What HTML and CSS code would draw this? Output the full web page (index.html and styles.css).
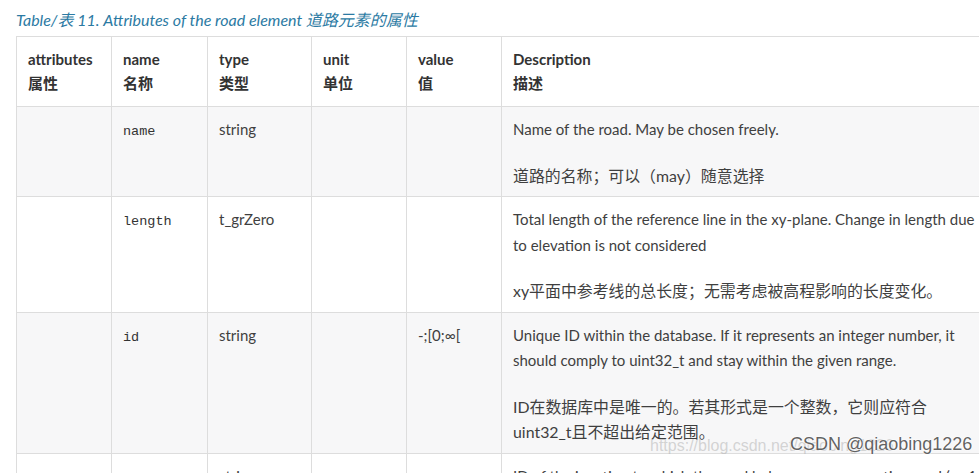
FILE: index.html
```html
<!DOCTYPE html>
<html>
<head>
<meta charset="utf-8">
<link rel="stylesheet" href="styles.css">
</head>
<body>
<div class="page">
  <p class="caption">Table/表 11. Attributes of the road element 道路元素的属性</p>
  <table class="attr-table">
    <colgroup>
      <col class="c-attr"><col class="c-name"><col class="c-type"><col class="c-unit"><col class="c-value"><col class="c-desc">
    </colgroup>
    <thead>
      <tr>
        <th>attributes<br>属性</th>
        <th>name<br>名称</th>
        <th>type<br>类型</th>
        <th>unit<br>单位</th>
        <th>value<br>值</th>
        <th>Description<br>描述</th>
      </tr>
    </thead>
    <tbody>
      <tr class="alt">
        <td></td>
        <td><code>name</code></td>
        <td>string</td>
        <td></td>
        <td></td>
        <td><p>Name of the road. May be chosen freely.</p><p class="zh">道路的名称；可以（may）随意选择</p></td>
      </tr>
      <tr>
        <td></td>
        <td><code>length</code></td>
        <td>t_grZero</td>
        <td></td>
        <td></td>
        <td><p>Total length of the reference line in the xy-plane. Change in length due to elevation is not considered</p><p class="zh">xy平面中参考线的总长度；无需考虑被高程影响的长度变化。</p></td>
      </tr>
      <tr class="alt">
        <td></td>
        <td><code>id</code></td>
        <td>string</td>
        <td></td>
        <td>-;[0;∞[</td>
        <td><p>Unique ID within the database. If it represents an integer number, it should comply to uint32_t and stay within the given range.</p><p class="zh">ID在数据库中是唯一的。若其形式是一个整数，它则应符合uint32_t且不超出给定范围。</p></td>
      </tr>
      <tr>
        <td></td>
        <td><code>junction</code></td>
        <td>string</td>
        <td></td>
        <td>-</td>
        <td><p>ID of the junction to which the road belongs as a connecting road (= -1 for none)</p></td>
      </tr>
    </tbody>
  </table>
  <div class="watermark"><span class="wm-url">https://blog.csdn.net/qiaobing1226</span><span class="wm-name">CSDN @qiaobing1226</span></div>
</div>
</body>
</html>
```

FILE: styles.css
```css
html, body {
  margin: 0;
  padding: 0;
  background: #fff;
  overflow: hidden;
}
body {
  font-family: "Lato", "Noto Sans CJK SC", sans-serif;
  font-size: 15px;
  color: #3f3f3f;
}
.page {
  position: relative;
  width: 979px;
  height: 473px;
  overflow: hidden;
  padding-left: 16px;
  box-sizing: border-box;
}
.caption {
  margin: 0;
  padding-top: 11px;
  height: 36px;
  box-sizing: border-box;
  font-style: italic;
  font-size: 16px;
  line-height: 18px;
  color: #2b7aa3;
}
.attr-table {
  border-collapse: collapse;
  width: 980px;
  table-layout: fixed;
}
.c-attr { width: 95px; }
.c-name { width: 96px; }
.c-type { width: 104px; }
.c-unit { width: 95px; }
.c-value { width: 95px; }
.attr-table th,
.attr-table td {
  border: 1px solid #dddddd;
  text-align: left;
  vertical-align: top;
  padding: 10px 11px 8px;
  line-height: 25.5px;
}
.attr-table th {
  font-weight: bold;
  line-height: 24px;
  padding: 10px 11px 11px;
  color: #333;
}
.attr-table tbody tr.alt td {
  background: #f7f7f8;
}
.attr-table td p {
  margin: 0 0 20px;
}
.attr-table td p:last-child {
  margin-bottom: 0;
}
.attr-table td p.zh {
  font-size: 15.9px;
}
code {
  font-family: "Liberation Mono", monospace;
  font-size: 13.5px;
  color: #333;
}
.watermark {
  position: absolute;
  left: 650px;
  top: 434px;
  white-space: nowrap;
  font-family: "Liberation Sans", sans-serif;
}
.wm-url {
  font-size: 16px;
  color: rgba(180, 180, 180, 0.55);
  position: absolute;
  left: 0;
  top: 3px;
}
.wm-name {
  position: absolute;
  left: 140px;
  top: 0;
  font-size: 18px;
  color: rgba(70, 70, 70, 0.85);
  text-shadow: 0 0 2px #fff, 0 0 2px #fff;
}
```
